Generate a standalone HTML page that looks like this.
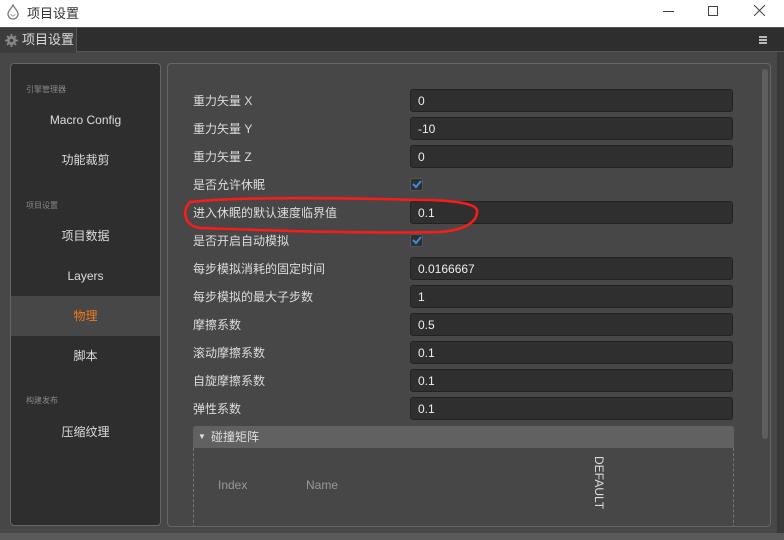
<!DOCTYPE html>
<html><head><meta charset="utf-8"><style>
*{margin:0;padding:0;box-sizing:border-box}
body{width:784px;height:540px;overflow:hidden;background:#474747;font-family:"Liberation Sans","Noto Sans CJK SC",sans-serif;position:relative}
.title{position:absolute;left:0;top:0;width:784px;height:27px;background:#fff;color:#333;font-size:13px}
.tabbar{position:absolute;left:0;top:27px;width:784px;height:25px;background:#2e2e2e;border-top:1px solid #555;border-bottom:1px solid #555}
.tab{position:absolute;left:0;top:0;width:77px;height:25px;background:#3c3c3c;color:#ddd;font-size:13px;line-height:23px;padding-left:22px;border-right:1px solid #555}
.left{position:absolute;left:10px;top:63px;width:151px;height:463px;background:#2e2e2e;border:1px solid #666;border-radius:4px}
.sec{position:absolute;left:15px;font-size:8px;color:#888}
.item{position:absolute;left:0;width:149px;height:40px;line-height:40px;text-align:center;color:#ddd;font-size:12px}
.right{position:absolute;left:167px;top:63px;width:604px;height:464px;border:1px solid #666;border-radius:4px;background:#474747;overflow:hidden}
.lab{position:absolute;left:193px;color:#ddd;font-size:12px;line-height:14px}
.inp{position:absolute;left:410px;width:323px;height:23px;background:#2f2f2f;border:1px solid #222;border-radius:3px;color:#eee;font-size:12px;line-height:22px;padding-left:7px}
.chk{position:absolute;left:410px;width:13px;height:13px;background:#2f2f2f;border-radius:2px;border:1px solid #555}
</style></head><body>
<div class="title">
<svg style="position:absolute;left:6px;top:4px" width="14" height="16" viewBox="0 0 14 16"><path d="M7 1C5 5 2 7 2 10a5 5 0 0 0 10 0C12 7 9 5 7 1z" fill="none" stroke="#777" stroke-width="1.3"/><path d="M5 10a2 2 0 0 0 4 0" fill="none" stroke="#999"/></svg>
<span style="position:absolute;left:27px;top:3px">项目设置</span>
<div style="position:absolute;left:663px;top:11px;width:11px;height:1px;background:#444"></div>
<div style="position:absolute;left:708px;top:6px;width:10px;height:10px;border:1px solid #444"></div>
<svg style="position:absolute;left:754px;top:5px" width="11" height="11"><path d="M0 0L11 11M11 0L0 11" stroke="#444"/></svg>
</div>
<div class="tabbar"><div class="tab"><svg style="position:absolute;left:5px;top:6px" width="13" height="13" viewBox="0 0 13 13"><circle cx="6.5" cy="6.5" r="4.5" fill="#888"/><path d="M6.5 0v13M0 6.5h13M2 2l9 9M11 2l-9 9" stroke="#888" stroke-width="1.8"/><circle cx="6.5" cy="6.5" r="1.8" fill="#3c3c3c"/></svg>项目设置</div>
<div style="position:absolute;left:759px;top:8px;width:8px;height:2px;background:#bbb;box-shadow:0 3px #bbb,0 6px #bbb"></div></div>
<div class="left">
<div class="sec" style="top:20px">引擎管理器</div>
<div class="item" style="top:36px">Macro Config</div>
<div class="item" style="top:76px">功能裁剪</div>
<div class="sec" style="top:136px">项目设置</div>
<div class="item" style="top:152px">项目数据</div>
<div class="item" style="top:192px">Layers</div>
<div class="item" style="top:232px;background:#474747;color:#f07a1c">物理</div>
<div class="item" style="top:272px">脚本</div>
<div class="sec" style="top:331px">构建发布</div>
<div class="item" style="top:348px">压缩纹理</div>
</div>
<div class="right">
<div style="position:absolute;left:594px;top:5px;width:6px;height:370px;background:#5e5e5e;border-radius:3px"></div>
<div style="position:absolute;left:25px;top:362px;width:541px;height:22px;background:#616161;border-radius:3px 3px 0 0;color:#ddd;font-size:12px;line-height:22px;padding-left:18px"><span style="position:absolute;left:5px;top:0;font-size:8px">▼</span>碰撞矩阵</div>
<div style="position:absolute;left:25px;top:384px;width:541px;height:90px;border-left:1px dashed #777;border-right:1px dashed #777"></div>
<div style="position:absolute;left:50px;top:414px;color:#999;font-size:12px">Index</div>
<div style="position:absolute;left:138px;top:414px;color:#999;font-size:12px">Name</div>
<div style="position:absolute;left:424px;top:392px;color:#ddd;font-size:12px;writing-mode:vertical-rl">DEFAULT</div>
</div>
<div class="lab" style="top:94px">重力矢量 X</div><div class="inp" style="top:89px">0</div>
<div class="lab" style="top:122px">重力矢量 Y</div><div class="inp" style="top:117px">-10</div>
<div class="lab" style="top:150px">重力矢量 Z</div><div class="inp" style="top:145px">0</div>
<div class="lab" style="top:178px">是否允许休眠</div><div class="chk" style="top:178px"></div>
<div class="lab" style="top:206px">进入休眠的默认速度临界值</div><div class="inp" style="top:201px">0.1</div>
<div class="lab" style="top:234px">是否开启自动模拟</div><div class="chk" style="top:234px"></div>
<div class="lab" style="top:262px">每步模拟消耗的固定时间</div><div class="inp" style="top:257px">0.0166667</div>
<div class="lab" style="top:290px">每步模拟的最大子步数</div><div class="inp" style="top:285px">1</div>
<div class="lab" style="top:318px">摩擦系数</div><div class="inp" style="top:313px">0.5</div>
<div class="lab" style="top:346px">滚动摩擦系数</div><div class="inp" style="top:341px">0.1</div>
<div class="lab" style="top:374px">自旋摩擦系数</div><div class="inp" style="top:369px">0.1</div>
<div class="lab" style="top:402px">弹性系数</div><div class="inp" style="top:397px">0.1</div>
<svg style="position:absolute;left:0;top:0" width="784" height="540"><path d="M413 184l3 3 5-6M413 240l3 3 5-6" fill="none" stroke="#3b8ee8" stroke-width="2"/>
<path d="M190 202C250 196 350 198 420 200C450 200 475 203 477 210C478 222 465 230 440 232C360 234 260 230 200 228C185 226 181 212 190 202Z" fill="none" stroke="#ff1a1a" stroke-width="2.5"/></svg>
<div style="position:absolute;left:0;top:533px;width:784px;height:7px;background:#5a5a5a"></div>
<div style="position:absolute;left:777px;top:52px;width:7px;height:481px;background:#3a3a3a"></div>
</body></html>
